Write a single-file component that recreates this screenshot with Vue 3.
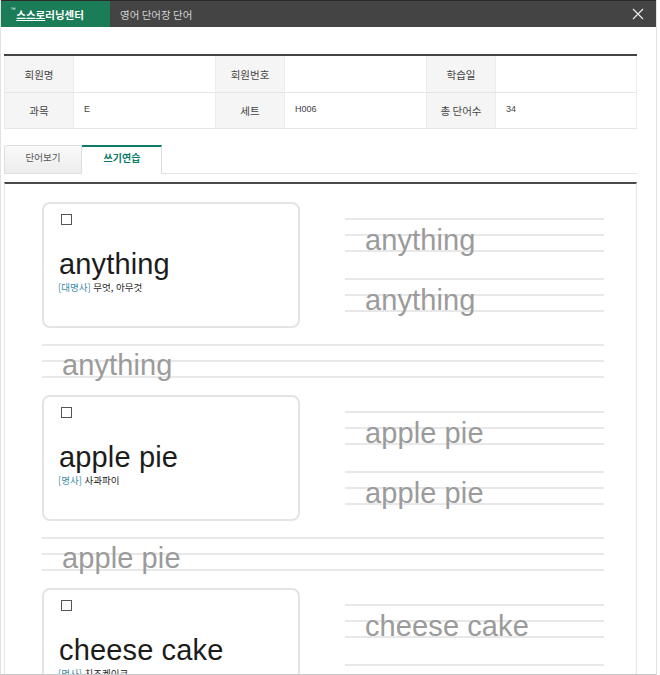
<script setup>
const infoRows = [
  [['회원명', ''], ['회원번호', ''], ['학습일', '']],
  [['과목', 'E'], ['세트', 'H006'], ['총 단어수', '34']]
];

const words = [
  { word: 'anything', pos: '[대명사]', meaning: '무엇, 아무것' },
  { word: 'apple pie', pos: '[명사]', meaning: '사과파이' },
  { word: 'cheese cake', pos: '[명사]', meaning: '치즈케이크' }
];
</script>

<template>
  <div class="window">
    <header class="title-bar">
      <div class="logo">
        <span class="tm">™</span>
        <span class="logo-name"><u>스스로</u>러닝센터</span>
      </div>
      <div class="title">영어 단어장 단어</div>
      <svg class="close" width="12" height="12" viewBox="0 0 12 12">
        <path d="M1 1l10 10M11 1L1 11" stroke="#f0f0f0" stroke-width="1.1" fill="none" />
      </svg>
    </header>

    <main class="content">
      <section class="info">
        <div v-for="(row, r) in infoRows" :key="r" class="info-row">
          <template v-for="cell in row" :key="cell[0]">
            <div class="info-label">{{ cell[0] }}</div>
            <div class="info-value">{{ cell[1] }}</div>
          </template>
        </div>
      </section>

      <nav class="tabs">
        <div class="tab">단어보기</div>
        <div class="tab active">쓰기연습</div>
      </nav>

      <section class="sheet">
        <article v-for="item in words" :key="item.word" class="entry">
          <div class="entry-top">
            <div class="card">
              <span class="check"></span>
              <div class="word">{{ item.word }}</div>
              <div class="meaning"><span class="pos">{{ item.pos }}</span> {{ item.meaning }}</div>
            </div>
            <div class="practice">
              <div class="guide"><span>{{ item.word }}</span></div>
              <div class="guide"><span>{{ item.word }}</span></div>
            </div>
          </div>
          <div class="guide wide"><span>{{ item.word }}</span></div>
        </article>
      </section>
    </main>
  </div>
</template>

<style>
html,
body {
  height: 675px;
  overflow: hidden;
  background: #fff;
}
</style>

<style scoped>
.window {
  box-sizing: border-box;
  width: 657px;
  height: 675px;
  overflow: hidden;
  border-left: 1px solid #e2e2e2;
  border-right: 1px solid #e2e2e2;
  border-bottom: 1px solid #c8c8c8;
  font-family: "Noto Sans CJK KR", "Liberation Sans", sans-serif;
}

.title-bar {
  display: flex;
  align-items: center;
  box-sizing: border-box;
  height: 27px;
  border-top: 1px solid #2a2a2a;
  background: #444;
}

.logo {
  display: flex;
  align-items: center;
  box-sizing: border-box;
  width: 109px;
  height: 100%;
  padding-left: 10px;
  background: #1b7c58;
  color: #fff;
}

.tm {
  align-self: flex-start;
  margin-top: 5px;
  font-size: 6px;
  line-height: 8px;
}

.logo-name {
  margin-left: 1px;
  font-size: 10.5px;
  font-weight: 700;
}

.title {
  flex: 1;
  padding-left: 10px;
  color: #d4d4d4;
  font-size: 10.5px;
}

.close {
  margin-right: 12px;
}

.content {
  padding: 27px 19px 0 3px;
}

.info {
  border-top: 2px solid #444;
}

.info-row {
  display: grid;
  grid-template-columns: 70px 141px 70px 141px 70px 141px;
  height: 36px;
  border-bottom: 1px solid #e6e6e6;
}

.info-row + .info-row {
  height: 35px;
}

.info-label {
  display: flex;
  align-items: center;
  justify-content: center;
  background: #f5f5f5;
  border-left: 1px solid #ececec;
  border-right: 1px solid #ececec;
  color: #444;
  font-size: 10.5px;
}

.info-value {
  display: flex;
  align-items: center;
  padding: 0 0 3px 10px;
  color: #444;
  font-family: "Liberation Sans", sans-serif;
  font-size: 9px;
}

.info-row .info-value:last-child {
  border-right: 1px solid #ececec;
}

.tabs {
  display: flex;
  box-sizing: border-box;
  height: 29px;
  margin-top: 16px;
  border-bottom: 1px solid #e4e4e4;
}

.tab {
  box-sizing: border-box;
  width: 78px;
  height: 29px;
  padding-top: 4px;
  border: 1px solid #dedede;
  border-radius: 2px 0 0 0;
  background: linear-gradient(#fafafa, #ececec);
  color: #555;
  font-size: 9.5px;
  text-align: center;
}

.tab.active {
  width: 80px;
  padding: 3px 0 0 1px;
  border: 1px solid #dedede;
  border-top: 2px solid #0c7c68;
  border-bottom: 0;
  border-left: 0;
  border-radius: 0;
  background: #fff;
  color: #0c7c68;
  font-size: 10px;
  font-weight: 700;
}

.sheet {
  box-sizing: border-box;
  margin-top: 8px;
  padding: 18px 32px 0 37px;
  border-top: 2px solid #4a4a4a;
  border-left: 1px solid #e6e6e6;
  border-right: 1px solid #e6e6e6;
}

.entry {
  margin-bottom: 17px;
}

.entry-top {
  display: flex;
  justify-content: space-between;
}

.card {
  box-sizing: border-box;
  width: 258px;
  height: 126px;
  padding: 10px 14px 0;
  border: 2px solid #e4e4e4;
  border-radius: 8px;
}

.check {
  display: block;
  box-sizing: border-box;
  width: 11px;
  height: 11px;
  margin-left: 3px;
  margin-bottom: 22px;
  border: 1px solid #555;
}

.word {
  padding-left: 1px;
  color: #1c1c1c;
  font-family: "Liberation Sans", sans-serif;
  font-size: 29px;
  letter-spacing: 0.15px;
  line-height: 34px;
}

.meaning {
  margin-top: -1px;
  color: #222;
  font-size: 9.5px;
  word-spacing: 0.5px;
  line-height: 14px;
}

.pos {
  color: #3d8ca6;
}

.practice {
  display: flex;
  flex-direction: column;
  gap: 26px;
  width: 259px;
  padding-top: 16px;
}

.guide {
  position: relative;
  box-sizing: border-box;
  height: 34px;
  border-top: 2px solid #e8e8e8;
  border-bottom: 2px solid #e8e8e8;
}

.guide::before {
  content: "";
  display: block;
  height: 2px;
  margin-top: 14px;
  background: #e8e8e8;
}

.guide span {
  position: absolute;
  top: 3px;
  left: 20px;
  color: #9b9b9b;
  font-family: "Liberation Sans", sans-serif;
  font-size: 29px;
  letter-spacing: 0.1px;
  line-height: 34px;
  white-space: nowrap;
}

.wide {
  width: 562px;
  margin-top: 16px;
}

.wide span {
  top: 2px;
}
</style>
